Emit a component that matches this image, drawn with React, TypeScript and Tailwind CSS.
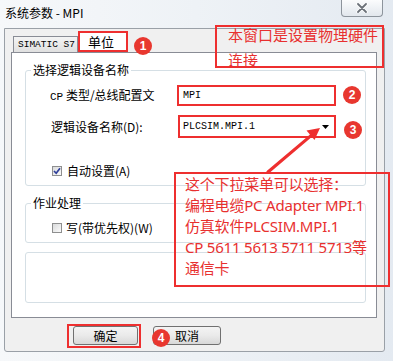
import React from "react";

const red = "#ee2f2f";

const Check = ({ checked }: { checked?: boolean }) => (
  <span className="w-[10px] h-[10px] border border-[#8e8f8f] bg-gradient-to-br from-[#d9dadb] to-[#fbfbfb] flex items-center justify-center">
    {checked && (
      <svg width="8" height="8" viewBox="0 0 8 8">
        <path d="M1 4 L3.2 6.3 L7 1.2" stroke="#2f3f9a" strokeWidth="1.7" fill="none" />
      </svg>
    )}
  </span>
);

const Badge = ({ n, className }: { n: string; className: string }) => (
  <div
    className={`absolute w-[18px] h-[18px] rounded-full bg-[#e8372f] text-white text-[12px] font-bold leading-[18px] text-center font-['Liberation_Sans',sans-serif] ${className}`}
  >
    {n}
  </div>
);

const Group = ({
  title,
  className,
  children,
}: {
  title: string;
  className: string;
  children?: React.ReactNode;
}) => (
  <div className={`relative ml-[13px] w-[341px] border border-[#d5dfe5] rounded-[3px] ${className}`}>
    {title && (
      <span className="absolute left-[5px] -top-[9px] bg-white px-[2px] text-[12px] leading-[16px]">
        {title}
      </span>
    )}
    {children}
  </div>
);

export default function App() {
  return (
    <div className="relative w-[393px] h-[361px] overflow-hidden bg-gradient-to-r from-[#f6f8fa] via-[#eef2f6] to-[#e4eaf1] font-['Noto_Sans_CJK_SC',sans-serif] text-black">
      {/* title bar */}
      <div className="h-[28px] pl-[5px] pt-[5px] text-[12px] leading-[16px]">系统参数 - MPI</div>
      <div className="absolute top-0 left-[341px] w-[42px] h-[17px] rounded-b-[4px] border border-t-0 border-[#8d949c] bg-gradient-to-b from-[#fbfcfd] to-[#e2e7ed] flex items-center justify-center">
        <svg width="12" height="10" viewBox="0 0 12 10">
          <path d="M2 1 L10 9 M10 1 L2 9" stroke="#ffffff" strokeWidth="3.4" strokeLinecap="round" />
          <path d="M2 1 L10 9 M10 1 L2 9" stroke="#6b7179" strokeWidth="1.8" strokeLinecap="round" />
        </svg>
      </div>

      {/* dialog client */}
      <div className="ml-[4px] w-[381px] h-[324px] border border-[#9aa0a7] bg-[#f0f0f0] rounded-b-[3px]">
        <div className="h-[23px] pl-[8px] flex items-end">
          <div className="w-[65px] h-[16px] border border-b-0 border-[#898c95] bg-gradient-to-b from-[#f4f4f4] to-[#e0e0e0] font-['Liberation_Mono',monospace] text-[9.5px] leading-[15px] pl-[4px] whitespace-nowrap overflow-hidden">
            SIMATIC S7
          </div>
          <div className="w-[50px] h-[21px] border-2 border-[#ee2f2f] bg-white text-[13px] leading-[18px] pl-[8px]">
            单位
          </div>
        </div>

        <div className="ml-[6px] w-[366px] h-[266px] border border-[#898c95] bg-white">
          <Group title="选择逻辑设备名称" className="mt-[17px] h-[116px]">
            <div className="pt-[14px] flex items-center">
              <div className="w-[151px] pl-[24px] text-[12px] leading-[16px]">
                <span className="font-['Liberation_Mono',monospace] text-[11px]">CP</span> 类型/总线配置文
              </div>
              <div className="w-[159px] h-[21px] border-2 border-[#ee2f2f] bg-white flex items-center pl-[4px] font-['Liberation_Mono',monospace] text-[10px]">
                MPI
              </div>
            </div>
            <div className="mt-[9px] flex items-center">
              <div className="w-[152px] pl-[25px] text-[12px] leading-[16px]">逻辑设备名称(D):</div>
              <div className="w-[158px] h-[23px] border-2 border-[#ee2f2f] bg-white flex items-center justify-between pl-[3px] pr-[5px] font-['Liberation_Mono',monospace] text-[10px]">
                <span>PLCSIM.MPI.1</span>
                <svg width="7" height="4" viewBox="0 0 7 4">
                  <path d="M0 0 H7 L3.5 4 Z" fill="#000" />
                </svg>
              </div>
            </div>
            <div className="mt-[25px] pl-[26px] h-[16px] flex items-center gap-[5px] text-[12px]">
              <Check checked />
              <span>自动设置(A)</span>
            </div>
          </Group>

          <Group title="作业处理" className="mt-[17px] h-[40px]">
            <div className="pt-[16px] pl-[26px] h-[32px] flex items-center gap-[4px] text-[12px]">
              <Check />
              <span>写(带优先权)(W)</span>
            </div>
          </Group>

          <Group title="" className="mt-[9px] h-[51px]" />
        </div>

        <div className="mt-[8px] ml-[68px] flex gap-[15px]">
          <button className="w-[65px] h-[19px] rounded-[3px] border border-[#707070] bg-gradient-to-b from-[#f4f4f4] via-[#eaeaea] to-[#d8d8d8] text-[12px] leading-none">
            确定
          </button>
          <button className="w-[68px] h-[19px] rounded-[3px] border border-[#707070] bg-gradient-to-b from-[#f4f4f4] via-[#eaeaea] to-[#d8d8d8] text-[12px] leading-none">
            取消
          </button>
        </div>
      </div>

      {/* annotations */}
      <div className="absolute left-[215px] top-[25px] w-[169px] h-[43px] border-2 border-[#ee2f2f] pl-[11px] text-[15px] text-[#e8302f]">
        <div className="leading-[16px]">本窗口是设置物理硬件</div>
        <div className="mt-[9px] leading-[16px]">连接</div>
      </div>

      <div className="absolute left-[174px] top-[172px] w-[216px] h-[115px] border-2 border-[#ee2f2f] pl-[9px] text-[15px] leading-[21px] tracking-[-0.2px] text-[#e8302f] font-['Noto_Sans','Noto_Sans_CJK_SC',sans-serif] whitespace-nowrap">
        <div>这个下拉菜单可以选择：</div>
        <div>编程电缆PC Adapter MPI.1</div>
        <div>仿真软件PLCSIM.MPI.1</div>
        <div>CP 5611 5613 5711 5713等</div>
        <div>通信卡</div>
      </div>

      <div className="absolute left-[67px] top-[324px] w-[74px] h-[24px] border-2 border-[#ee2f2f]" />

      <svg className="absolute left-0 top-0 pointer-events-none" width="393" height="361" viewBox="0 0 393 361">
        <path d="M268 172 L311 135.6" stroke={red} strokeWidth="3.2" strokeLinecap="round" />
        <path d="M320 128 L314.5 140 L306.5 130.5 Z" fill={red} />
      </svg>

      <Badge n="1" className="left-[134px] top-[37px]" />
      <Badge n="2" className="left-[343px] top-[86px]" />
      <Badge n="3" className="left-[344px] top-[121px]" />
      <Badge n="4" className="left-[152px] top-[329px]" />
    </div>
  );
}
